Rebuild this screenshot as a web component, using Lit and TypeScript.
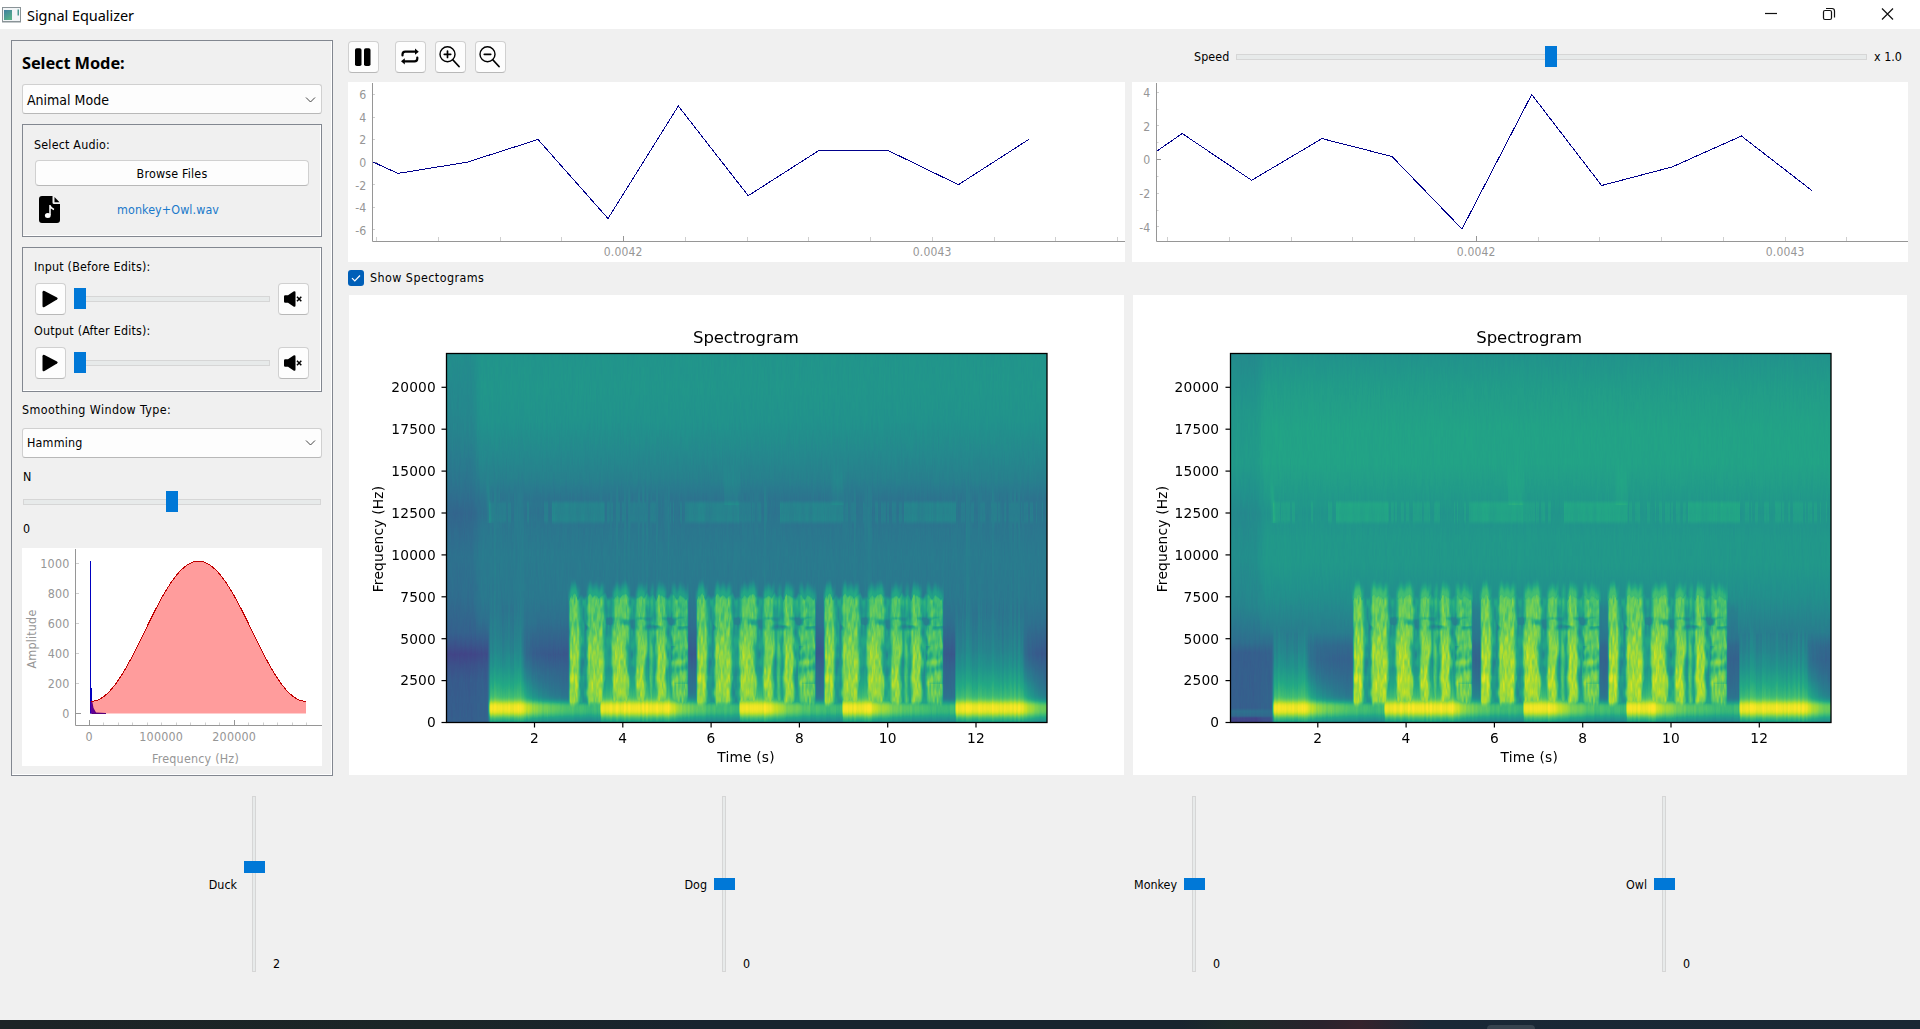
import { LitElement, html, svg, css } from "lit";
import { customElement, property } from "lit/decorators.js";

const VIRIDIS = [
  [68, 1, 84], [72, 36, 117], [65, 68, 135], [53, 95, 141], [42, 120, 142],
  [33, 145, 140], [34, 168, 132], [68, 191, 112], [122, 209, 81], [189, 223, 38], [253, 231, 37],
];

type Stops = [number, number][];

const lerpStops = (stops: Stops, v: number): number => {
  if (v <= stops[0][0]) return stops[0][1];
  for (let i = 1; i < stops.length; i++) {
    if (v <= stops[i][0]) {
      const [a, va] = stops[i - 1];
      const [b, vb] = stops[i];
      return va + ((vb - va) * (v - a)) / (b - a);
    }
  }
  return stops[stops.length - 1][1];
};

const hash = (x: number, y: number): number => {
  let h = (Math.imul(x | 0, 374761393) + Math.imul(y | 0, 668265263)) | 0;
  h = Math.imul(h ^ (h >>> 13), 1274126177);
  return ((h ^ (h >>> 16)) >>> 0) / 4294967295;
};

const noise = (x: number, y: number): number => {
  const xi = Math.floor(x), yi = Math.floor(y);
  const fx = x - xi, fy = y - yi;
  const sx = fx * fx * (3 - 2 * fx), sy = fy * fy * (3 - 2 * fy);
  const a = hash(xi, yi), b = hash(xi + 1, yi), c = hash(xi, yi + 1), d = hash(xi + 1, yi + 1);
  return (a + (b - a) * sx) * (1 - sy) + (c + (d - c) * sx) * sy;
};

const step = (a: number, b: number, v: number): number => {
  const t = Math.min(1, Math.max(0, (v - a) / (b - a)));
  return t * t * (3 - 2 * t);
};

// Background level by frequency, for the input and the equalized output.
const BASE: Record<string, { loud: Stops; quiet: Stops }> = {
  input: {
    loud: [[0, 0.34], [1500, 0.36], [3000, 0.325], [4100, 0.27], [5000, 0.315], [6000, 0.365], [7500, 0.4], [10000, 0.41], [11500, 0.395], [12500, 0.37], [13400, 0.385], [14500, 0.43], [16000, 0.465], [18000, 0.505], [20000, 0.52], [22000, 0.515]],
    quiet: [[0, 0.3], [2500, 0.285], [3400, 0.25], [4100, 0.205], [4700, 0.26], [5400, 0.31], [7500, 0.355], [10000, 0.375], [12500, 0.33], [14500, 0.39], [17500, 0.45], [22000, 0.485]],
  },
  output: {
    loud: [[0, 0.34], [1500, 0.37], [3800, 0.31], [4600, 0.34], [5400, 0.42], [7500, 0.49], [9500, 0.53], [11000, 0.53], [12500, 0.505], [13500, 0.535], [15500, 0.575], [17500, 0.575], [20000, 0.545], [22000, 0.505]],
    quiet: [[0, 0.19], [300, 0.21], [420, 0.34], [700, 0.37], [900, 0.3], [4200, 0.3], [4800, 0.36], [7000, 0.45], [10000, 0.49], [12500, 0.47], [15500, 0.54], [18000, 0.53], [22000, 0.475]],
  },
};

// Hoots: start, end of the sustained part, end of the fade (plot pixels).
const HOOTS = [[43, 74, 154], [154, 222, 293], [293, 324, 396], [396, 424, 509], [509, 575, 640]];
const SKIRT: Stops = [[1000, 0.8], [1300, 0.74], [1600, 0.68], [2000, 0.63], [2600, 0.57], [3400, 0.5], [4300, 0.45], [5300, 0.42], [6600, 0.395]];
const FLOOR: Stops = [[0, 0.55], [200, 0.62], [420, 0.72], [650, 0.8]];
const GROUPS = [122.5, 250, 377.5];
const BARS = [[0, 10, 1], [18, 34, 0.97], [43, 59, 0.97], [67, 77, 0.95], [80.5, 84, 0.6], [87, 97, 0.96], [103, 119, 0.8]];
const PATCHES = [[106, 158], [240, 293], [334, 397], [458, 510]];

const level = (x: number, y: number, kind: string): number => {
  const f = (369.5 - y) * 59.6;
  const base = BASE[kind];
  const out = kind === "output";
  const low = 0.3 * step(24, 36, x) + 0.7 * step(40, 44, x);
  const k = low + (step(24, 36, x) - low) * step(4500, 6500, f);
  let v = lerpStops(base.quiet, f) * (1 - k) + lerpStops(base.loud, f) * k;

  // 12.5 kHz chatter
  if (x > 42 && f > 11750 && f < 13350) {
    const inPatch = PATCHES.some(([a, b]) => x >= a && x < b);
    const n = hash(Math.floor(x / 1.5), 7);
    const near = noise(x / 26, 3);
    const s = inPatch ? 0.65 + 0.3 * noise(x / 4, 9) : n > 0.85 - near * 0.6 ? 0.55 : 0.1;
    v += 0.085 * s * step(11750, 12150, f) * (1 - step(13000, 13350, f));
  }
  if (f >= 13000 && f < 15800) {
    const a = step(276, 279, x) * (1 - step(291, 295, x)) + step(383, 387, x) * (1 - step(395, 399, x));
    v += 0.03 * a * (1 - step(14000, 15800, f));
  }
  if (f > 11900 && f < 15500) {
    const c = 43.5 - (f - 11900) / 1100;
    v += 0.06 * Math.exp(-(((x - c) / 2) ** 2)) * (1 - step(12800, 15500, f));
  }

  // Hoot band around 890 Hz with skirts on both sides
  for (const [a, b, c] of HOOTS) {
    if (x < a - 2 || x >= c) continue;
    const rise = step(a - 2, a + 1.5, x);
    const t = x <= b ? 0 : (x - b) / (c - b);
    const ripple = (hash(Math.floor(x / 2), a) - 0.5) * 0.05 + (noise(x / 3, a) - 0.5) * 0.03;
    const fade = 1 - Math.exp(-t * 3.2);
    const bg = v;
    const skirt = f > 890 ? lerpStops(SKIRT, f) : lerpStops(FLOOR, f);
    const decay = f > 890
      ? Math.exp(-t * (1.2 + f / 550)) * (t > 0 ? 1 - 0.25 * step(0, 0.06, t) * step(1800, 3500, f) : 1)
      : 1 - 0.5 * fade;
    v = Math.max(bg, bg + (skirt + ripple * 0.9 - bg) * decay * rise);
    const peak = 0.98 - 0.32 * fade + ripple * 0.7;
    const core = Math.exp(-Math.pow(Math.abs(f - 890) / (f > 890 ? 400 : 430), 2.6));
    v = Math.max(v, v + (peak - v) * core * rise);
    break;
  }
  // Narrow gaps between the call groups
  if (f < 7400 && ((x > 241 && x < 250) || (x > 368.5 && x < 377.5) || (x > 497 && x < 508))) {
    const limit = (out ? 0.36 : 0.31) + Math.abs(f - 4200) / 34000;
    if (v > limit) v += (limit - v) * step(1350, 2000, f) * (1 - step(6600, 7400, f));
  }

  // Monkey calls
  for (const g of GROUPS) {
    const o = x - g;
    if (o < -1 || o > 120) continue;
    const topEdge = 7550 + (noise(o / 3, 40) - 0.4) * 500;
    const bottom = 1250 - noise(o / 2.5, 22) * 150;
    if (f < bottom - 250 || f > topEdge + 900) continue;
    let amp = 0;
    for (const [a, b, s] of BARS) {
      const wob = (noise(a, f / 900) - 0.5) * 3;
      amp = Math.max(amp, s * step(a - 1.8, a + 2.4, o + wob * 0.5) * (1 - step(b - 2.4, b + 2.8, o + wob)));
    }
    const env = lerpStops([[1200, 0.81], [1700, 0.83], [2500, 0.88], [3200, 0.82], [3900, 0.84], [5200, 0.79], [6000, 0.73], [6600, 0.75], [7300, 0.74], [7700, 0.65]], f);
    const gap = 0.54 + (noise(o / 4, f / 600) - 0.5) * 0.12 + (f < 2800 ? 0.02 : 0);
    let m = gap + (env + (out ? 0.03 : 0) - gap) * amp;
    m += (noise(o / 1.8, f / 450 + 50) - 0.5) * 0.12;
    m += (noise(o / 1.1, f / 280 + 90) - 0.5) * 0.06 * amp;
    if (o > 16 && f > 5400 && f < 6400) {
      const belt = step(5400, 5800, f) * (1 - step(6100, 6400, f));
      m -= 0.2 * belt * step(0.4, 0.85, noise(o / 8 + 5, f / 400));
    }
    if (o > 102) {
      const arc = 0.5 + 0.5 * Math.sin((f - o * 28) / 150 + noise(o / 6, f / 500) * 3);
      m -= 0.13 * arc * (f > 2300 && f < 4600 ? 1 : 0.35);
    }
    const rim = step(bottom - 250, bottom + 150, f) * (1 - step(topEdge - 200, topEdge + 200, f)) * step(-1, 1.2, o) * (1 - step(118, 120, o));
    const glow = 0.2 * amp * step(7000, 7500, f) * (1 - step(topEdge, topEdge + 900, f));
    v = Math.max(v * (1 - rim) + Math.max(m, 0.43) * rim, v + glow);
  }

  v += (hash(Math.floor(x), Math.floor(y / 7)) - 0.5) * 0.01 + (noise(x / 1.2, y / 18) - 0.5) * 0.016;
  return Math.min(1, Math.max(0, v));
};

@customElement("spectrogram-plot")
class SpectrogramPlot extends LitElement {
  @property() kind = "input";

  static styles = css`
    :host { display: block; background: #fff; overflow: hidden; }
    .stack { display: grid; width: 775px; height: 480px; }
    .stack > * { grid-area: 1 / 1; }
    canvas { display: block; margin: 58px 0 0 97px; width: 601px; height: 370px; }
    svg { display: block; z-index: 1; }
    text { font-family: "DejaVu Sans", sans-serif; font-size: 13.75px; fill: #000; }
    .title { font-size: 16.5px; }
  `;

  firstUpdated() {
    const canvas = this.renderRoot.querySelector("canvas") as HTMLCanvasElement;
    const ctx = canvas.getContext("2d")!;
    const img = ctx.createImageData(601, 370);
    for (let y = 0; y < 370; y++) {
      for (let x = 0; x < 601; x++) {
        const v = level(x, y, this.kind) * 10;
        const i = Math.min(9, Math.floor(v));
        const p = (y * 601 + x) * 4;
        for (let c = 0; c < 3; c++) img.data[p + c] = VIRIDIS[i][c] + (VIRIDIS[i + 1][c] - VIRIDIS[i][c]) * (v - i);
        img.data[p + 3] = 255;
      }
    }
    ctx.putImageData(img, 0, 0);
  }

  render() {
    const dx = this.kind === "output" ? -0.7 : 0;
    return html`<div class="stack">
      <canvas width="601" height="370"></canvas>
      <svg width="775" height="480">
        <rect x="97.5" y="58.5" width="600.5" height="369" fill="none" stroke="#000" stroke-width="1.3" />
        <text class="title" x=${397 + dx} y="48.2" text-anchor="middle" textLength="106">Spectrogram</text>
        ${[0, 1, 2, 3, 4, 5, 6, 7, 8].map((i) => {
          const y = 427.5 - i * 41.9;
          return svg`<path d=${`M92.5 ${y}H97.5`} stroke="#000" stroke-width="1.2"/>
            <text x=${87 + dx} y=${y + 4.8} text-anchor="end">${i * 2500}</text>`;
        })}
        ${[2, 4, 6, 8, 10, 12].map((s) => {
          const x = 97.2 + s * 44.15 + dx;
          return svg`<path d=${`M${x} 427.5V432.5`} stroke="#000" stroke-width="1.2"/>
            <text x=${x} y="447.7" text-anchor="middle">${s}</text>`;
        })}
        <text x=${397 + dx} y="467.3" text-anchor="middle">Time (s)</text>
        <text transform="translate(34 244) rotate(-90)" text-anchor="middle">Frequency (Hz)</text>
      </svg>
    </div>`;
  }
}

interface Chart {
  axis: number;
  x0: number;
  y0: number;
  unit: number;
  labels: number[];
  minorY: number[];
  points: number[][];
}

const CHARTS: Chart[] = [
  {
    axis: 24.5, x0: 275.7, y0: 80.2, unit: 11.27, labels: [6, 4, 2, 0, -2, -4, -6], minorY: [],
    points: [[25, 80], [50, 91.4], [119, 80.2], [190, 57.5], [260, 136.5], [330.3, 24], [400.2, 113.7], [470.6, 68.7], [540.5, 68.7], [610.4, 102.7], [680.8, 57.4]],
  },
  {
    axis: 24.5, x0: 344.3, y0: 77.6, unit: 16.8, labels: [4, 2, 0, -2, -4], minorY: [3, 1, -1, -3],
    points: [[25, 69], [50.2, 51.5], [119.6, 98.3], [190, 56.6], [260, 74.5], [330, 147], [399.7, 12.5], [469.6, 103.5], [540, 85], [609.4, 54], [679.8, 108.5]],
  },
];

@customElement("signal-chart")
class SignalChart extends LitElement {
  @property({ attribute: false }) chart: Chart = CHARTS[0];

  static styles = css`
    :host { display: block; background: #fff; height: 180px; overflow: hidden; }
    svg { display: block; }
    text { font-family: "DejaVu Sans Condensed", "DejaVu Sans", sans-serif; font-size: 12.2px; fill: #969696; }
    .axis { stroke: #969696; fill: none; }
    .minor { stroke: #cfcfcf; fill: none; }
    .line { stroke: #00008b; stroke-width: 1; fill: none; shape-rendering: crispEdges; }
  `;

  render() {
    const c = this.chart;
    const ticks: number[] = [];
    for (let i = -6; i < 9; i++) {
      const x = c.x0 + i * 61.75;
      if (x > c.axis && x < 777) ticks.push(i);
    }
    return html`<svg width="777" height="180">
      ${ticks.map((i) => {
        const x = Math.floor(c.x0 + i * 61.75) + 0.5;
        const big = i === 0;
        return svg`<path class=${big ? "axis" : "minor"} d=${`M${x} ${big ? 154 : 155}V159`}/>
          ${i === 0 || i === 5 ? svg`<text x=${x - 0.3} y="174" text-anchor="middle" textLength="39" lengthAdjust="spacingAndGlyphs">${i === 0 ? "0.0042" : "0.0043"}</text>` : ""}`;
      })}
      ${c.labels.map((v) => {
        const y = c.y0 - v * c.unit;
        const yy = Math.floor(y) + 0.5;
        return svg`<path class="minor" d=${`M25 ${yy}h2`}/>
          <text x="18.5" y=${y + 4.8} text-anchor="end">${v}</text>`;
      })}
      <path class="axis" d=${`M25 ${Math.floor(c.y0) + 0.5}h4`} />
      ${c.minorY.map((v) => svg`<path class="minor" d=${`M25 ${Math.floor(c.y0 - v * c.unit) + 0.5}h1.5`}/>`)}
      <path class="axis" d="M24.5 1V159.5H777" />
      <polyline class="line" points=${c.points.map((p) => p.join(",")).join(" ")} />
    </svg>`;
  }
}

@customElement("window-chart")
class WindowChart extends LitElement {
  static styles = css`
    :host { display: block; background: #fff; height: 218px; }
    svg { display: block; }
    text { font-family: "DejaVu Sans Condensed", "DejaVu Sans", sans-serif; font-size: 12.4px; fill: #969696; }
    .axis { stroke: #969696; fill: none; }
    .minor { stroke: #cfcfcf; fill: none; }
  `;

  render() {
    const curve: string[] = [];
    for (let i = 0; i <= 215; i++) {
      const w = 0.54 - 0.46 * Math.cos((2 * Math.PI * i) / 215);
      curve.push(`${69 + i},${(165.5 - w * 152.3).toFixed(1)}`);
    }
    return html`<svg width="300" height="218">
      ${[0, 200, 400, 600, 800, 1000].map((v) => {
        const y = 165.5 - v * 0.15;
        return svg`<path class=${v ? "minor" : "axis"} d=${`M54 ${y}h${v ? 3 : 5}`}/>
          <text x="47.5" y=${y + 4.8} text-anchor="end">${v}</text>`;
      })}
      ${Array.from({ length: 16 }, (_, i) => {
        const x = Math.round(67 + i * 14.47) + 0.5;
        const big = i === 0 || i === 10;
        return svg`<path class=${big ? "axis" : "minor"} d=${`M${x} ${big ? 172 : 174.5}V177`}/>
          ${i % 5 === 0 && i < 15 ? svg`<text x=${x - 0.3} y="193" text-anchor="middle">${i * 20000}</text>` : ""}`;
      })}
      <path class="axis" d="M53.5 1V177.5H300" />
      <path d="M68 165.500V13h1V140h1V152l1.500 8 2.500 4.500 10 .5v.5Z" fill="#0000c0" />
      <polygon points=${`69,165.5 ${curve.join(" ")} 284,165.5`} fill="#ff0000" fill-opacity="0.39" />
      <path d="M69.500 153l1 6 2 5 2 1.500h-6v-12.500Z" fill="#60009a" />
      <path d="M70 165.500h14" stroke="#5a0078" fill="none" />
      <polyline points=${curve.join(" ")} fill="none" stroke="#c00000" shape-rendering="crispEdges" />
      <text x="173.500" y="214.500" text-anchor="middle" textLength="87">Frequency (Hz)</text>
      <text transform="translate(13.500 91) rotate(-90)" text-anchor="middle">Amplitude</text>
    </svg>`;
  }
}

const playIcon = svg`<path d="M7.500 9.200Q7.500 7 9.500 8L22 14.600Q23.500 15.500 22 16.500L9.500 24Q7.500 25 7.500 23Z"/>`;
const muteIcon = svg`<path d="M6 13.500Q6 12.300 7.200 12.300H10L15.500 8.500Q17.500 7.500 17.500 9.500V22.500Q17.500 24.500 15.500 23.500L10 19.700H7.200Q6 19.700 6 18.500Z"/><path d="M19 13.700l4.300 4.600M23.300 13.700L19 18.300" stroke="#000" stroke-width="1.500"/>`;
const pauseIcon = svg`<rect x="7" y="7.200" width="6.500" height="17.800" rx="1.800"/><rect x="16" y="7.200" width="6.500" height="17.800" rx="1.800"/>`;
const loopIcon = svg`<g fill="none" stroke="#000" stroke-width="2.200" stroke-linecap="round"><path d="M7.500 14.500V13.500Q7.500 10.700 10.300 10.700H20.500"/><path d="M22.300 16.500V17.500Q22.300 20.300 19.500 20.300H9.500"/></g><path d="M20 7.600L23.800 10.700L20 13.800ZM9.800 17.200L6 20.300L9.800 23.400Z"/>`;
const zoomIcon = (plus: boolean) => svg`<g fill="none" stroke="#000" stroke-width="1.400" stroke-linecap="round"><circle cx="12.500" cy="13.300" r="7.500"/><path d="M18 19L24 25.500" stroke-width="1.800"/><path d="M9.300 13.300h6.400" stroke-width="1.700"/>${plus ? svg`<path d="M12.500 10.100v6.400" stroke-width="1.700"/>` : ""}</g>`;

@customElement("app-root")
class AppRoot extends LitElement {
  static styles = css`
    :host {
      display: flex; flex-direction: column; width: 1920px; height: 1029px; overflow: hidden;
      background: #f0f0f0; color: #000;
      font: 12.4px/16px "DejaVu Sans Condensed", "DejaVu Sans", sans-serif; letter-spacing: 0.2px;
    }
    * { box-sizing: border-box; }
    svg { display: block; flex: none; }
    .titlebar { display: flex; align-items: center; height: 29px; background: #fff; padding-left: 2px; flex: none; }
    .caption { flex: 1; margin-left: 6px; font: 14.500px/20px "Noto Sans", sans-serif; letter-spacing: -0.05px; }
    .main { display: flex; height: 748px; flex: none; }
    .side { display: flex; flex-direction: column; width: 322px; height: 736px; margin: 11px 15px 0 11px; padding: 0 10px; border: 1px solid #828790; box-shadow: inset -1px -1px #fff; flex: none; }
    .heading { font: bold 16.400px/20px "Noto Sans", sans-serif; margin: 12px 0 11px; letter-spacing: -0.1px; }
    .combo { display: flex; align-items: center; justify-content: space-between; height: 30px; padding: 0 5px 0 4px; border: 1px solid #d0d0d0; border-bottom-color: #b8b8b8; border-radius: 3px; background: #fdfdfd; flex: none; }
    .combo.big { font-size: 14px; letter-spacing: 0; padding-top: 1px; }
    .combo .wide { letter-spacing: 0.1px; }
    .frame { border: 1px solid #828790; box-shadow: inset -1px -1px #fff; padding: 0 12px 0 11px; flex: none; }
    .audio { height: 113px; margin-top: 10px; }
    .audio .label { margin-top: 12px; }
    .browse { display: flex; justify-content: center; align-items: center; height: 26px; margin: 7px 0 10px 1px; padding-top: 1px; background: #fdfdfd; border: 1px solid #d0d0d0; border-bottom-color: #b8b8b8; border-radius: 4px; }
    .file { display: flex; align-items: center; height: 27px; padding-left: 5px; }
    .file span { color: #1979ca; margin-left: 57px; letter-spacing: 0.1px; }
    .players { height: 145px; margin-top: 10px; padding-top: 11px; }
    .row { display: flex; align-items: center; height: 32px; margin: 8px 0 8px 1px; }
    .btn { width: 31px; height: 32px; border: 1px solid #d0d0d0; border-bottom-color: #b8b8b8; border-radius: 4px; background: #fdfdfd; flex: none; }
    .btn svg { margin: -1px 0 0 -1px; }
    .slider { position: relative; height: 21px; flex: 1; }
    .slider::before { content: ""; position: absolute; left: 0; right: 0; top: 8px; height: 4px; border: 1px solid #d6d6d6; background: #e7eaea; }
    .thumb { position: absolute; top: 0; width: 12px; height: 21px; background: #0078d7; }
    .row .slider { margin: -1px 8px 0 8px; }
    .smooth { margin: 10px 0 10px; letter-spacing: 0.4px; }
    .nlabel { margin: 11px 0 6px 1px; }
    .nslider { flex: none; margin: 0 1px; }
    .nvalue { margin: 9px 0 11px 1px; }
    .content { display: flex; flex-direction: column; width: 1560px; }
    .toolbar { display: flex; align-items: center; height: 32px; margin-top: 12px; }
    .toolbar .btn + .btn { margin-left: 9px; }
    .toolbar .btn.loop { margin-left: 16px; }
    .speed { display: flex; align-items: center; margin-left: auto; width: 714px; letter-spacing: 0.1px; }
    .speed .slider { margin: -1px 7px 0 7px; }
    .speed .rate { width: 34px; letter-spacing: 0; }
    .charts { display: grid; grid-template-columns: 777px 776px; gap: 7px; margin-top: 9px; }
    .check { display: flex; align-items: center; height: 16px; margin: 8px 0 9px; gap: 6px; letter-spacing: 0.45px; }
    .spectra { display: grid; grid-template-columns: 775px 774px; gap: 9px; margin-left: 1px; }
    .bands { display: grid; grid-template-columns: repeat(4, 470px); height: 243px; padding: 19px 0 48px 19px; flex: none; letter-spacing: 0; }
    .band { display: grid; grid-template-columns: 1fr 4px 1fr; align-items: center; }
    .band .name { text-align: right; padding-right: 15px; margin-top: 1px; }
    .groove { position: relative; height: 176px; border: 1px solid #d6d6d6; background: #e7eaea; }
    .vthumb { position: absolute; left: -9px; width: 21px; height: 12px; background: #0078d7; }
    .val { align-self: end; padding: 0 0 0 17px; }
    .taskbar { display: flex; justify-content: flex-end; align-items: flex-end; flex: 1; padding-right: 385px;
      background: linear-gradient(90deg, #1c2426 0, #1b2527 440px, #18242f 700px, #18242f 1180px, #1c2b29 1230px, #2a222d 1320px, #35222c 1360px, #192836 1430px, #192733 100%); }
    .tab { width: 48px; height: 4px; border-radius: 4px 4px 0 0; background: #36434e; }
  `;

  private button(icon: unknown, extra = "") {
    return html`<div class="btn ${extra}"><svg width="31" height="32" viewBox="0 0 31 32">${icon}</svg></div>`;
  }

  private slider(left: number, extra = "") {
    return html`<div class="slider ${extra}"><div class="thumb" style="left:${left}px"></div></div>`;
  }

  private combo(label: string, extra = "") {
    return html`<div class="combo ${extra}"><span>${label}</span>
      <svg width="11" height="8"><path d="M1 1.500l4.500 4.500 4.500-4.500" fill="none" stroke="#444" /></svg></div>`;
  }

  render() {
    const bands = [
      { name: "Duck", value: 2, top: 64 }, { name: "Dog", value: 0, top: 81 },
      { name: "Monkey", value: 0, top: 81 }, { name: "Owl", value: 0, top: 81 },
    ];
    return html`
      <div class="titlebar">
        <svg width="19" height="16">
          <defs><linearGradient id="g" x2="0.6" y2="1"><stop stop-color="#3f7fa0" /><stop offset="1" stop-color="#55b089" /></linearGradient></defs>
          <rect x=".5" y=".5" width="18" height="14" fill="#f2f5f7" stroke="#8a9397" />
          <rect x="2" y="3" width="8" height="10" fill="url(#g)" /><rect x="15.500" y="2.500" width="1.500" height="6" fill="#4b9a92" />
          <path d="M0 15.500h19" stroke="#c5cacc" />
        </svg>
        <span class="caption">Signal Equalizer</span>
        <svg width="155" height="29" fill="none" stroke="#111" stroke-width="1.200">
          <path d="M0 13.500h12" /><rect x="58.500" y="10.500" width="8" height="9" rx="1.500" />
          <path d="M61 8.500h6q2.500 0 2.500 2.500v6.500" /><path d="M117 8.500l11 11M128 8.500l-11 11" />
        </svg>
      </div>
      <div class="main">
        <div class="side">
          <div class="heading">Select Mode:</div>
          ${this.combo("Animal Mode", "big")}
          <div class="frame audio">
            <div class="label">Select Audio:</div>
            <div class="browse">Browse Files</div>
            <div class="file">
              <svg width="21" height="27"><path d="M3 0H13.500V6.500Q13.500 8 15 8H21V24Q21 27 18 27H3Q0 27 0 24V3Q0 0 3 0Z" /><path d="M15.500 1L20.500 6.300H15.500Z" />
                <path d="M11 19V9q.5 3.500 4 4.500" fill="none" stroke="#fff" stroke-width="1.500" /><ellipse cx="8.800" cy="19.500" rx="2.900" ry="2.500" fill="#fff" /></svg>
              <span>monkey+Owl.wav</span>
            </div>
          </div>
          <div class="frame players">
            <div>Input (Before Edits):</div>
            <div class="row">${this.button(playIcon)}${this.slider(0)}${this.button(muteIcon)}</div>
            <div>Output (After Edits):</div>
            <div class="row">${this.button(playIcon)}${this.slider(0)}${this.button(muteIcon)}</div>
          </div>
          <div class="smooth">Smoothing Window Type:</div>
          ${this.combo("Hamming", "wide")}
          <div class="nlabel">N</div>
          ${this.slider(143, "nslider")}
          <div class="nvalue">0</div>
          <window-chart></window-chart>
        </div>
        <div class="content">
          <div class="toolbar">
            ${this.button(pauseIcon)}${this.button(loopIcon, "loop")}${this.button(zoomIcon(true))}${this.button(zoomIcon(false))}
            <div class="speed"><span>Speed</span>${this.slider(309)}<span class="rate">x 1.0</span></div>
          </div>
          <div class="charts"><signal-chart .chart=${CHARTS[0]}></signal-chart><signal-chart .chart=${CHARTS[1]}></signal-chart></div>
          <div class="check">
            <svg width="16" height="16"><rect width="16" height="16" rx="3" fill="#005fb8" /><path d="M4 8.200l2.800 2.800L12 5.500" fill="none" stroke="#fff" stroke-width="1.200" /></svg>
            <span>Show Spectograms</span>
          </div>
          <div class="spectra"><spectrogram-plot kind="input"></spectrogram-plot><spectrogram-plot kind="output"></spectrogram-plot></div>
        </div>
      </div>
      <div class="bands">
        ${bands.map((b) => html`<div class="band"><span class="name">${b.name}</span>
          <div class="groove"><div class="vthumb" style="top:${b.top}px"></div></div>
          <span class="val">${b.value}</span></div>`)}
      </div>
      <div class="taskbar"><div class="tab"></div></div>`;
  }
}
